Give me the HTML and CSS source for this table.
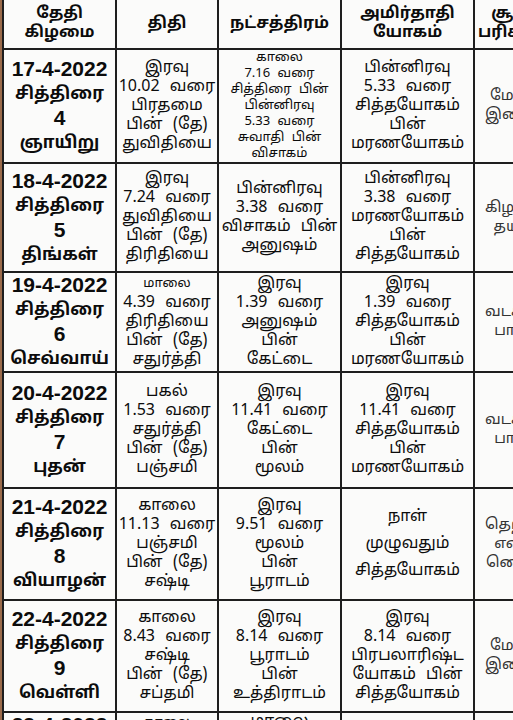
FILE: index.html
```html
<!DOCTYPE html>
<html lang="ta">
<head>
<meta charset="utf-8">
<title>பஞ்சாங்கம்</title>
<link rel="stylesheet" href="styles.css">
</head>
<body>
<div class="page">
<table class="cal">
<colgroup>
<col class="c1"><col class="c2"><col class="c3"><col class="c4"><col class="c5">
</colgroup>
<tr class="head">
<th>தேதி<br>கிழமை</th>
<th>திதி</th>
<th>நட்சத்திரம்</th>
<th>அமிர்தாதி<br>யோகம்</th>
<th class="p ph"><span class="blk">சூலம்<br>பரிகாரம்</span></th>
</tr>
<tr class="r1">
<td class="d"><span class="num">17-4-2022</span><br>சித்திரை<br><span class="num">4</span><br>ஞாயிறு</td>
<td class="t">இரவு<br>10.02 வரை<br>பிரதமை<br>பின் (தே)<br>துவிதியை</td>
<td class="s">காலை<br>7.16 வரை<br>சித்திரை பின்<br>பின்னிரவு<br>5.33 வரை<br>சுவாதி பின்<br>விசாகம்</td>
<td class="t">பின்னிரவு<br>5.33 வரை<br>சித்தயோகம்<br>பின்<br>மரணயோகம்</td>
<td class="p"><span class="blk">மேற்கு<br>இனிப்பு</span></td>
</tr>
<tr class="r2">
<td class="d"><span class="num">18-4-2022</span><br>சித்திரை<br><span class="num">5</span><br>திங்கள்</td>
<td class="t">இரவு<br>7.24 வரை<br>துவிதியை<br>பின் (தே)<br>திரிதியை</td>
<td class="t">பின்னிரவு<br>3.38 வரை<br>விசாகம் பின்<br>அனுஷம்</td>
<td class="t">பின்னிரவு<br>3.38 வரை<br>மரணயோகம்<br>பின்<br>சித்தயோகம்</td>
<td class="p"><span class="blk">கிழக்கு<br>தயிர்</span></td>
</tr>
<tr class="r3">
<td class="d"><span class="num">19-4-2022</span><br>சித்திரை<br><span class="num">6</span><br>செவ்வாய்</td>
<td class="t"><span class="sm">மாலை</span><br>4.39 வரை<br>திரிதியை<br>பின் (தே)<br>சதுர்த்தி</td>
<td class="t">இரவு<br>1.39 வரை<br>அனுஷம்<br>பின்<br>கேட்டை</td>
<td class="t">இரவு<br>1.39 வரை<br>சித்தயோகம்<br>பின்<br>மரணயோகம்</td>
<td class="p"><span class="blk">வடக்கு<br>பால்</span></td>
</tr>
<tr class="r4">
<td class="d"><span class="num">20-4-2022</span><br>சித்திரை<br><span class="num">7</span><br>புதன்</td>
<td class="t">பகல்<br>1.53 வரை<br>சதுர்த்தி<br>பின் (தே)<br>பஞ்சமி</td>
<td class="t">இரவு<br>11.41 வரை<br>கேட்டை<br>பின்<br>மூலம்</td>
<td class="t">இரவு<br>11.41 வரை<br>சித்தயோகம்<br>பின்<br>மரணயோகம்</td>
<td class="p"><span class="blk">வடக்கு<br>பால்</span></td>
</tr>
<tr class="r5">
<td class="d"><span class="num">21-4-2022</span><br>சித்திரை<br><span class="num">8</span><br>வியாழன்</td>
<td class="t">காலை<br>11.13 வரை<br>பஞ்சமி<br>பின் (தே)<br>சஷ்டி</td>
<td class="t">இரவு<br>9.51 வரை<br>மூலம்<br>பின்<br>பூராடம்</td>
<td class="t wide">நாள்<br>முழுவதும்<br>சித்தயோகம்</td>
<td class="p"><span class="blk">தெற்கு<br>எண்<br>ணெய்</span></td>
</tr>
<tr class="r6">
<td class="d"><span class="num">22-4-2022</span><br>சித்திரை<br><span class="num">9</span><br>வெள்ளி</td>
<td class="t">காலை<br>8.43 வரை<br>சஷ்டி<br>பின் (தே)<br>சப்தமி</td>
<td class="t">இரவு<br>8.14 வரை<br>பூராடம்<br>பின்<br>உத்திராடம்</td>
<td class="t">இரவு<br>8.14 வரை<br>பிரபலாரிஷ்ட<br>யோகம் பின்<br>சித்தயோகம்</td>
<td class="p"><span class="blk">மேற்கு<br>இனிப்பு</span></td>
</tr>
<tr class="r7">
<td class="d top"><span class="num">23-4-2022</span><br>சித்திரை</td>
<td class="t top"><span class="sm">காலை</span><br>6.07 வரை</td>
<td class="t top">மாலை<br>5.08 வரை</td>
<td class="t top"></td>
<td class="p top"></td>
</tr>
</table>
</div>
</body>
</html>
```
FILE: styles.css
```css
html, body {
  margin: 0;
  padding: 0;
  width: 513px;
  height: 720px;
  overflow: hidden;
  background: #9b6b4b;
}
.page {
  margin-left: 2px;
  height: 720px;
  overflow: hidden;
  background: #fbfbfa;
}
.cal {
  border-collapse: collapse;
  table-layout: fixed;
  width: 620px;
  margin-top: -2px;
  font-family: "Noto Sans Tamil", "Lohit Tamil", "Noto Sans", "DejaVu Sans", sans-serif;
  color: #0c0c0c;
}
.c1 { width: 113px; }
.c2 { width: 102px; }
.c3 { width: 123px; }
.c4 { width: 133px; }
.c5 { width: 149px; }
.cal th, .cal td {
  border: 2px solid #1e1e1e;
  text-align: center;
  vertical-align: middle;
  padding: 0 1px;
  overflow: hidden;
  white-space: nowrap;
}
.cal th {
  font-weight: 700;
  font-size: 16px;
  line-height: 19px;
}
.head th { height: 48px; }
.r1 td { height: 104px; }
.r2 td { height: 107px; }
.r3 td { height: 95px; }
.r4 td { height: 114px; }
.r5 td { height: 110px; }
.r6 td { height: 110px; }
.r7 td { height: 40px; }
.d {
  font-weight: 700;
  font-size: 17px;
  line-height: 23px;
}
.d .num {
  font-family: "Liberation Sans", Arial, sans-serif;
  font-size: 21px;
}
.t {
  font-size: 16px;
  line-height: 19px;
  word-spacing: 6px;
}
.t .sm { font-size: 13px; }
.s {
  font-size: 13px;
  line-height: 16px;
  word-spacing: 4px;
}
.wide { line-height: 27px; }
.cal .p {
  font-size: 15px;
  line-height: 19px;
  text-align: left;
  padding-left: 10px;
  color: #333;
}
.cal .ph {
  padding-left: 3px;
  font-size: 16px;
  color: #0c0c0c;
}
.blk {
  display: inline-block;
  text-align: center;
}
.cal .top { vertical-align: top; }
```
